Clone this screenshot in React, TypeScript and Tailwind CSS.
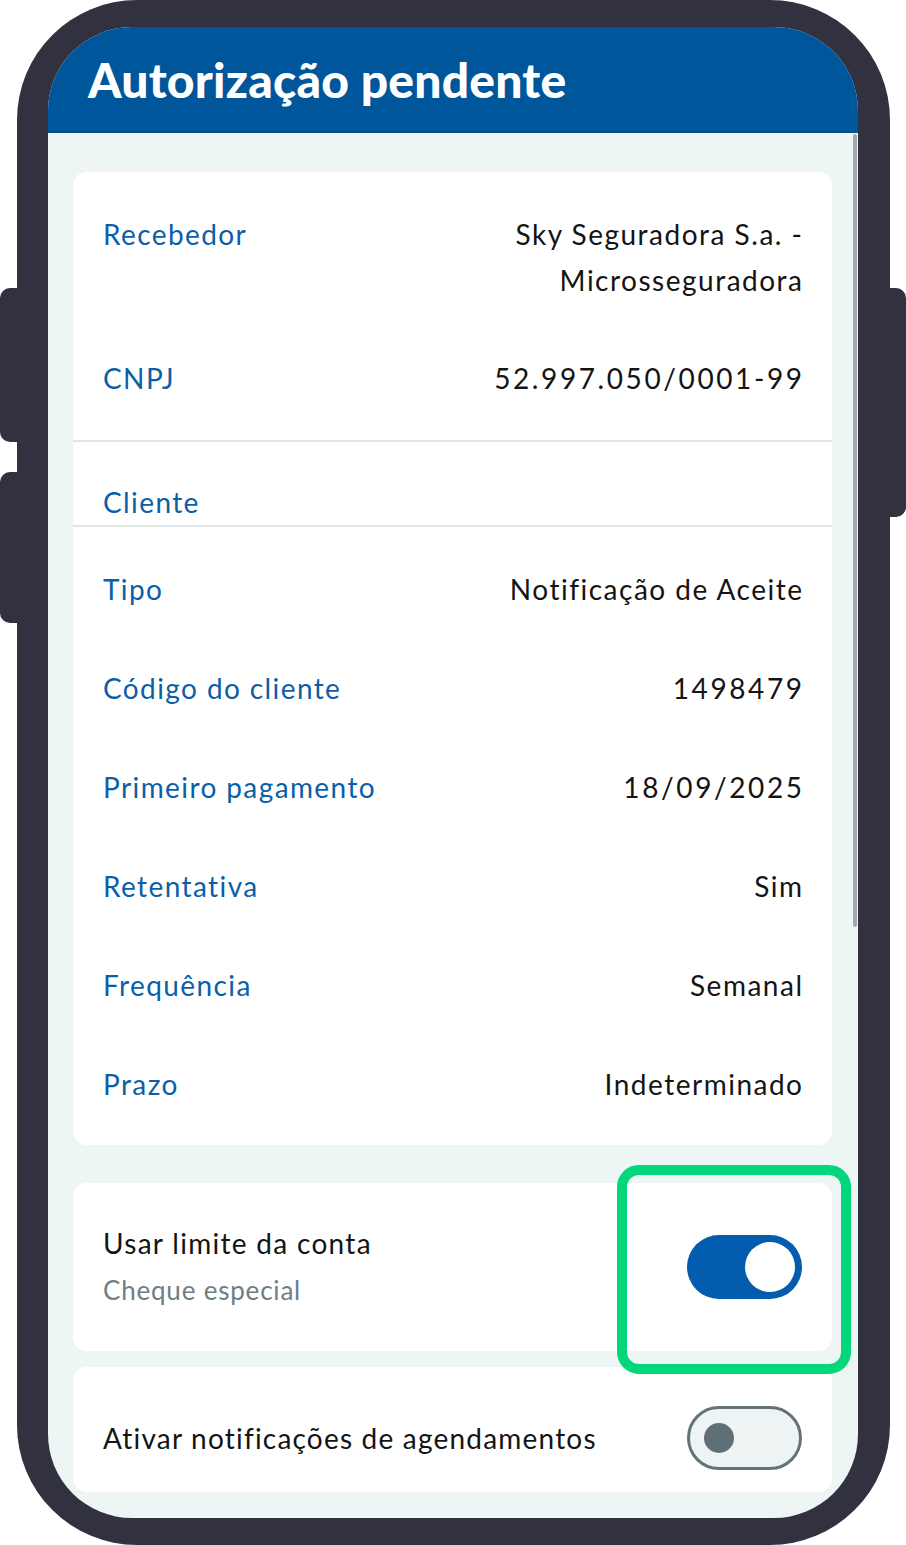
import React from "react"

const rows = [
  { label: "Tipo", value: "Notificação de Aceite", num: false },
  { label: "Código do cliente", value: "1498479", num: true },
  { label: "Primeiro pagamento", value: "18/09/2025", num: true },
  { label: "Retentativa", value: "Sim", num: false },
  { label: "Frequência", value: "Semanal", num: false },
  { label: "Prazo", value: "Indeterminado", num: false },
]

function Row({ label, num, children }: { label: string; num?: boolean; children: React.ReactNode }) {
  return (
    <div className="flex justify-between items-start leading-[46px] text-[28px]">
      <span className="text-[#0a5fa8] tracking-[1.4px]">{label}</span>
      <span
        className={
          num
            ? "text-right text-[#141414] tracking-[2.6px] mr-[-2.6px]"
            : "text-right text-[#141414] tracking-[1.5px] mr-[-1.5px]"
        }
      >
        {children}
      </span>
    </div>
  )
}

function Toggle({ on }: { on: boolean }) {
  if (on) {
    return (
      <div className="w-[115px] h-[64px] rounded-full bg-[#035cad] flex items-center justify-end pr-[7px] shrink-0">
        <div className="w-[50px] h-[50px] rounded-full bg-white" />
      </div>
    )
  }
  return (
    <div className="w-[115px] h-[64px] rounded-full border-[3px] border-[#63737a] bg-[#eef4f4] flex items-center pl-[14px] shrink-0">
      <div className="w-[30px] h-[30px] rounded-full bg-[#5f6f76]" />
    </div>
  )
}

export default function App() {
  return (
    <div className="w-[906px] h-[1545px] bg-white flex" style={{ fontFamily: "Lato, 'Open Sans', sans-serif" }}>
      {/* left side buttons */}
      <div className="w-[17px] flex flex-col pt-[288px] gap-[30px]">
        <div className="h-[154px] bg-[#32313f] rounded-l-[10px]" />
        <div className="h-[151px] bg-[#32313f] rounded-l-[10px]" />
      </div>

      <div className="w-[873px] h-full bg-[#32313f] rounded-[120px] pt-[27px] pb-[27px] pl-[31px] pr-[32px]">
        <div className="relative h-full rounded-[84px] overflow-hidden bg-[#edf5f5] flex flex-col">
          <header className="h-[106px] bg-[#00569a] border-b-2 border-[#0a4f8c] flex items-center pl-[40px] shrink-0">
            <h1 className="text-white text-[48px] font-black tracking-[0.2px] leading-none pt-[2px]">Autorização pendente</h1>
          </header>

          <main className="flex-1 pl-[25px] pr-[26px] pt-[39px] flex flex-col">
            <section className="bg-white rounded-[14px]">
              <div className="px-[30px] pt-[39px] pb-[39px] flex flex-col gap-[52px]">
                <Row label="Recebedor">
                  Sky Seguradora S.a. -<br />Microsseguradora
                </Row>
                <Row label="CNPJ" num>52.997.050/0001-99</Row>
              </div>
              <div className="h-[2px] bg-[#e2e5e7]" />
              <div className="px-[30px] pt-[37px] leading-[46px] text-[28px] tracking-[1.4px] text-[#0a5fa8]">Cliente</div>
              <div className="h-[2px] bg-[#e2e5e7]" />
              <div className="px-[30px] pt-[39px] pb-[38px] flex flex-col gap-[53px]">
                {rows.map((r) => (
                  <Row key={r.label} label={r.label} num={r.num}>{r.value}</Row>
                ))}
              </div>
            </section>

            <section className="mt-[38px] h-[168px] bg-white rounded-[14px] px-[30px] flex items-center justify-between">
              <div className="flex flex-col">
                <span className="text-[28px] leading-[46px] tracking-[1.3px] text-[#141414]">Usar limite da conta</span>
                <span className="text-[26px] leading-[48px] tracking-[0.8px] text-[#6e7e83]">Cheque especial</span>
              </div>
              <Toggle on />
            </section>

            <section className="mt-[16px] bg-white rounded-[14px] px-[30px] pt-[39px] pb-[22px] flex items-center justify-between">
              <span className="text-[28px] leading-[46px] tracking-[1.2px] text-[#141414]">Ativar notificações de agendamentos</span>
              <Toggle on={false} />
            </section>
          </main>

          {/* scrollbar */}
          <div className="absolute right-[1px] top-[107px] w-[4px] h-[793px] bg-[#9fa9aa] rounded-full" />

          {/* highlight */}
          <div className="absolute left-[569px] top-[1138px] w-[234px] h-[209px] border-[10px] border-[#04d77b] rounded-[22px]" />
        </div>
      </div>

      {/* right side button */}
      <div className="w-[16px] pt-[288px]">
        <div className="h-[229px] bg-[#32313f] rounded-r-[10px]" />
      </div>
    </div>
  )
}
